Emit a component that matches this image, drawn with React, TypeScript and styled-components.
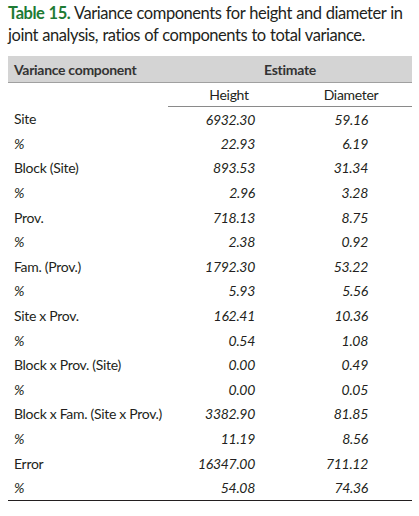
import styled, { createGlobalStyle } from 'styled-components';

const GlobalStyle = createGlobalStyle`
  body {
    margin: 0;
    background: #ffffff;
    font-family: Lato, "Open Sans", sans-serif;
    color: #231f20;
  }
`;

const Page = styled.div`
  padding: 2px 7px 0 8px;
`;

const Caption = styled.p`
  margin: 0 0 10px;
  font-size: 16.5px;
  letter-spacing: -0.45px;
  word-spacing: 0.5px;
  line-height: 22px;
  color: #231f20;
`;

const Label = styled.span`
  color: #1e7b34;
  font-weight: 700;
`;

const Table = styled.table`
  width: 404px;
  border-collapse: collapse;
  font-size: 14px;
  letter-spacing: -0.3px;
  border-bottom: 1.5px solid #231f20;
`;

const HeadCell = styled.th<{ $center?: boolean }>`
  background: #d4d4d4;
  border-bottom: 1px solid #a0a0a0;
  height: 26px;
  padding: 0 6px;
  font-weight: 700;
  color: #333333;
  text-align: ${({ $center }) => ($center ? 'center' : 'left')};
`;

const SubCell = styled.td<{ $line?: boolean }>`
  height: 23px;
  padding: 0;
  text-align: center;
  border-bottom: ${({ $line }) => ($line ? '1px solid #8a8a8a' : 'none')};
`;

const NameCell = styled.td`
  height: 24.6px;
  padding: 0 6px;
  width: 148px;
  white-space: nowrap;
`;

const ValueCell = styled.td<{ $pad: number }>`
  padding: 0 ${({ $pad }) => $pad}px 0 0;
  text-align: right;
  font-style: italic;
  width: ${({ $pad }) => 122 - $pad}px;
`;

const rows: [string, string, string][] = [
  ['Site', '6932.30', '59.16'],
  ['%', '22.93', '6.19'],
  ['Block (Site)', '893.53', '31.34'],
  ['%', '2.96', '3.28'],
  ['Prov.', '718.13', '8.75'],
  ['%', '2.38', '0.92'],
  ['Fam. (Prov.)', '1792.30', '53.22'],
  ['%', '5.93', '5.56'],
  ['Site x Prov.', '162.41', '10.36'],
  ['%', '0.54', '1.08'],
  ['Block x Prov. (Site)', '0.00', '0.49'],
  ['%', '0.00', '0.05'],
  ['Block x Fam. (Site x Prov.)', '3382.90', '81.85'],
  ['%', '11.19', '8.56'],
  ['Error', '16347.00', '711.12'],
  ['%', '54.08', '74.36'],
];

export default function App() {
  return (
    <>
      <GlobalStyle />
      <Page>
        <Caption>
          <Label>Table 15.</Label> Variance components for height and diameter in joint analysis, ratios of components to total variance.
        </Caption>
        <Table>
          <thead>
            <tr>
              <HeadCell>Variance component</HeadCell>
              <HeadCell $center colSpan={2}>Estimate</HeadCell>
            </tr>
          </thead>
          <tbody>
            <tr>
              <SubCell />
              <SubCell $line>Height</SubCell>
              <SubCell $line>Diameter</SubCell>
            </tr>
            {rows.map(([name, h, d], i) => (
              <tr key={i}>
                <NameCell>{name === '%' ? <i>%</i> : name}</NameCell>
                <ValueCell $pad={35}>{h}</ValueCell>
                <ValueCell $pad={44}>{d}</ValueCell>
              </tr>
            ))}
          </tbody>
        </Table>
      </Page>
    </>
  );
}
